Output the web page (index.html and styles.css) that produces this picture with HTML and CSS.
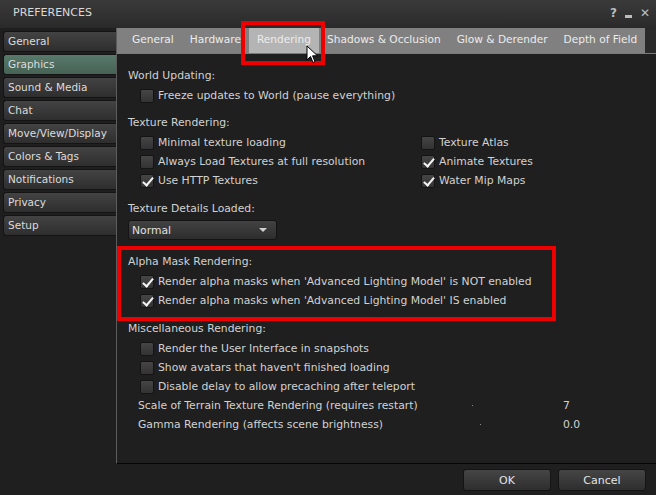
FILE: index.html
```html
<!DOCTYPE html>
<html lang="en">
<head>
    <meta charset="UTF-8">
    <title>Preferences</title>
    <link rel="stylesheet" href="styles.css">
</head>
<body>
    <div class="titlebar">
        <span class="title">PREFERENCES</span>
        <div class="title-icons">
            <span class="ticon">?</span>
            <span class="ticon min"></span>
            <span class="ticon">&#x2715;</span>
        </div>
    </div>

    <div class="main">
        <div class="sidebar">
            <div class="side-btn">General</div>
            <div class="side-btn active">Graphics</div>
            <div class="side-btn">Sound &amp; Media</div>
            <div class="side-btn">Chat</div>
            <div class="side-btn">Move/View/Display</div>
            <div class="side-btn">Colors &amp; Tags</div>
            <div class="side-btn">Notifications</div>
            <div class="side-btn">Privacy</div>
            <div class="side-btn">Setup</div>
        </div>

        <div class="panel">
            <div class="tabstrip">
                <div class="tabs">
                    <span class="tab">General</span>
                    <span class="tab">Hardware</span>
                    <span class="tab selected">Rendering</span>
                    <span class="tab">Shadows &amp; Occlusion</span>
                    <span class="tab">Glow &amp; Derender</span>
                    <span class="tab">Depth of Field</span>
                </div>
            </div>

            <div class="content">
                <div class="heading">World Updating:</div>
                <div class="check"><span class="box"></span>Freeze updates to World (pause everything)</div>

                <div class="heading gap">Texture Rendering:</div>
                <div class="two-col">
                    <div class="check"><span class="box"></span>Minimal texture loading</div>
                    <div class="check"><span class="box"></span>Texture Atlas</div>
                    <div class="check"><span class="box"></span>Always Load Textures at full resolution</div>
                    <div class="check"><span class="box on"></span>Animate Textures</div>
                    <div class="check"><span class="box on"></span>Use HTTP Textures</div>
                    <div class="check"><span class="box on"></span>Water Mip Maps</div>
                </div>

                <div class="heading gap-lg">Texture Details Loaded:</div>
                <div class="dropdown">
                    <span>Normal</span>
                    <span class="caret"></span>
                </div>

                <div class="heading gap-xl">Alpha Mask Rendering:</div>
                <div class="check"><span class="box on"></span>Render alpha masks when 'Advanced Lighting Model' is NOT enabled</div>
                <div class="check"><span class="box on"></span>Render alpha masks when 'Advanced Lighting Model' IS enabled</div>

                <div class="heading gap-lg">Miscellaneous Rendering:</div>
                <div class="check"><span class="box"></span>Render the User Interface in snapshots</div>
                <div class="check"><span class="box"></span>Show avatars that haven't finished loading</div>
                <div class="check"><span class="box"></span>Disable delay to allow precaching after teleport</div>
                <div class="slider-row">
                    <span>Scale of Terrain Texture Rendering (requires restart)</span>
                    <span class="dot"></span>
                    <span class="value">7</span>
                </div>
                <div class="slider-row">
                    <span>Gamma Rendering (affects scene brightness)</span>
                    <span class="dot shift"></span>
                    <span class="value">0.0</span>
                </div>
            </div>
        </div>
    </div>

    <div class="footer">
        <button class="btn">OK</button>
        <button class="btn">Cancel</button>
    </div>

    <!-- annotation overlays -->
    <div class="highlight hl-tab"></div>
    <div class="highlight hl-alpha"></div>
    <svg class="cursor" width="13" height="19" viewBox="0 0 13 19">
        <path d="M1 1 L1 15 L4.5 11.5 L7 17.5 L9 16.6 L6.6 10.8 L11.5 10.8 Z" fill="#fff" stroke="#000" stroke-width="1"/>
    </svg>
</body>
</html>
```

FILE: styles.css
```css
* {
    box-sizing: border-box;
}

body {
    margin: 0;
    width: 656px;
    height: 495px;
    background-color: #1f1f1f;
    font-family: "DejaVu Sans", sans-serif;
    font-size: 10.8px;
    color: #d2d2d2;
    position: relative;
    overflow: hidden;
}

.titlebar {
    height: 28px;
    background: linear-gradient(#3a3a3a, #2a2a2a);
    display: flex;
    justify-content: space-between;
    align-items: flex-start;
    padding: 6px 6px 0 13px;
}

.title {
    color: #dadada;
    font-size: 11px;
}

.title-icons {
    display: flex;
    gap: 8px;
    color: #bcbcbc;
    font-size: 12px;
    font-weight: bold;
}

.ticon.min {
    width: 7px;
    height: 3px;
    background-color: #bcbcbc;
    margin-top: 9px;
}

.main {
    display: flex;
    height: 436px;
}

.sidebar {
    width: 116px;
    padding: 3px 0 0 3px;
    display: flex;
    flex-direction: column;
    gap: 2px;
}

.side-btn {
    height: 21px;
    width: 116px;
    padding: 3px 0 0 4px;
    border: 1px solid #141414;
    border-right: none;
    border-radius: 3px 0 0 3px;
    background: linear-gradient(#434343, #2e2e2e);
    color: #dcdcdc;
    font-size: 10.5px;
}

.side-btn.active {
    background: linear-gradient(#587a6a, #466255);
}

.panel {
    flex: 1;
    border-left: 1px solid #5c5c5c;
    border-bottom: 1px solid #050505;
    position: relative;
    z-index: 1;
    background-color: #1f1f1f;
}

.tabstrip {
    height: 26px;
    border-bottom: 1px solid #7a7a7a;
    background-color: #2a2a2a;
}

.tabs {
    width: 528px;
    height: 25px;
    background-color: #808080;
    display: flex;
    padding-left: 7px;
    overflow: hidden;
}

.tab {
    padding: 5px 8px 0 8px;
    color: #ececec;
    white-space: nowrap;
    font-size: 10.6px;
}

.tab.selected {
    background-color: #b4b4b4;
}

.content {
    padding: 12px 0 0 11px;
}

.heading {
    height: 19px;
    line-height: 19px;
    margin-bottom: 1px;
}

.heading.gap {
    margin-top: 8px;
}

.heading.gap-lg {
    margin-top: 9px;
}

.heading.gap-xl {
    margin-top: 12px;
}

.check {
    height: 19px;
    display: flex;
    align-items: center;
    gap: 4px;
    padding-left: 12px;
    white-space: nowrap;
}

.box {
    width: 14px;
    height: 14px;
    border: 1px solid #141414;
    border-radius: 2px;
    background: linear-gradient(#454545, #333333);
    position: relative;
    flex-shrink: 0;
}

.box.on::after {
    content: "";
    position: absolute;
    left: 4px;
    top: 0px;
    width: 4px;
    height: 9px;
    border: solid #f4f4f4;
    border-width: 0 2.5px 2.5px 0;
    transform: rotate(40deg);
}

.two-col {
    display: grid;
    grid-template-columns: 293px auto;
}

.two-col .check:nth-child(even) {
    padding-left: 0;
}

.dropdown {
    margin-top: 2px;
    width: 149px;
    height: 20px;
    border: 1px solid #141414;
    border-radius: 3px;
    background: linear-gradient(#424242, #2d2d2d);
    display: flex;
    align-items: center;
    justify-content: space-between;
    padding: 0 9px 0 3px;
    color: #e0e0e0;
}

.caret {
    width: 0;
    height: 0;
    border-left: 4px solid transparent;
    border-right: 4px solid transparent;
    border-top: 4px solid #d0d0d0;
}

.slider-row {
    height: 19px;
    display: grid;
    grid-template-columns: 334px 91px auto;
    align-items: center;
    padding-left: 10px;
    white-space: nowrap;
}

.dot {
    width: 1px;
    height: 1px;
    background-color: #8a8a8a;
}

.dot.shift {
    margin-left: 8px;
}

.footer {
    display: flex;
    justify-content: flex-end;
    gap: 7px;
    padding: 5px 10px 0 0;
}

.btn {
    width: 88px;
    height: 22px;
    border: 1px solid #141414;
    border-radius: 3px;
    background: linear-gradient(#454545, #2e2e2e);
    color: #e4e4e4;
    font-family: "DejaVu Sans", sans-serif;
    font-size: 11px;
}

.highlight {
    position: absolute;
    border: 4px solid #ee0000;
    z-index: 5;
}

.hl-tab {
    left: 241px;
    top: 21px;
    width: 84px;
    height: 44px;
}

.hl-alpha {
    left: 117px;
    top: 246px;
    width: 439px;
    height: 75px;
}

.cursor {
    position: absolute;
    left: 306px;
    top: 45px;
    z-index: 6;
}
```
